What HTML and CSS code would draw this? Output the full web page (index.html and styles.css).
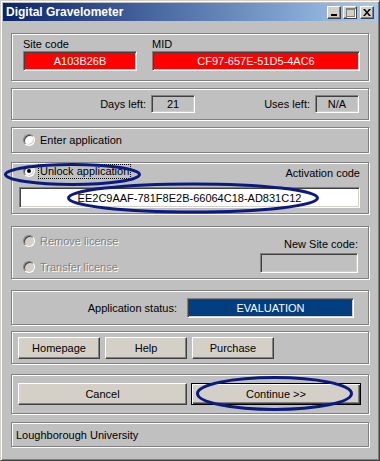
FILE: index.html
```html
<!DOCTYPE html>
<html>
<head>
<meta charset="utf-8">
<link rel="stylesheet" href="styles.css">
</head>
<body>
<div class="window">
  <div class="titlebar">
    <span class="title">Digital Gravelometer</span>
    <div class="tbtns">
      <div class="tbtn tb-min"><span class="min-glyph"></span></div>
      <div class="tbtn tb-max"><span class="max-glyph"></span></div>
      <div class="tbtn tb-close">
        <svg width="8" height="7" viewBox="0 0 8 7"><path d="M0 0h2l2 2.5 2-2.5h2l-3 3.5 3 3.5h-2l-2-2.5-2 2.5h-2l3-3.5z" fill="#000"/></svg>
      </div>
    </div>
  </div>
  <div class="client">
    <div class="group g1">
      <div class="lbl">Site code</div>
      <div class="lbl">MID</div>
      <div class="field red">A103B26B</div>
      <div class="field red">CF97-657E-51D5-4AC6</div>
    </div>
    <div class="group g2">
      <div class="pair"><span>Days left:</span><div class="field small">21</div></div>
      <div class="pair"><span>Uses left:</span><div class="field small">N/A</div></div>
    </div>
    <div class="group g3">
      <div class="radio-row"><span class="radio"></span><span class="rtext">Enter application</span></div>
    </div>
    <div class="group g4">
      <div class="g4-top">
        <div class="radio-row"><span class="radio checked"></span><span class="rtext focus">Unlock application</span></div>
        <span class="act-lbl">Activation code</span>
      </div>
      <div class="field white">EE2C9AAF-781F8E2B-66064C18-AD831C12</div>
    </div>
    <div class="group g5">
      <div class="g5-left">
        <div class="radio-row"><span class="radio disabled"></span><span class="rtext dis">Remove license</span></div>
        <div class="radio-row"><span class="radio disabled"></span><span class="rtext dis">Transfer license</span></div>
      </div>
      <div class="g5-right">
        <span class="nsc">New Site code:</span>
        <div class="field nsc-field"></div>
      </div>
    </div>
    <div class="group g6">
      <span>Application status:</span>
      <div class="field status">EVALUATION</div>
    </div>
    <div class="group g7">
      <div class="btn">Homepage</div>
      <div class="btn">Help</div>
      <div class="btn">Purchase</div>
    </div>
    <div class="group g8">
      <div class="btn wide">Cancel</div>
      <div class="btn wide default">Continue &gt;&gt;</div>
    </div>
    <div class="group g9">
      <span>Loughborough University</span>
    </div>
  </div>
  <svg class="annot" width="380" height="461" viewBox="0 0 380 461">
    <ellipse cx="72.5" cy="174.5" rx="67" ry="10" fill="none" stroke="#0b1a82" stroke-width="3"/>
    <ellipse cx="193" cy="198" rx="124.5" ry="14" fill="none" stroke="#0b1a82" stroke-width="3"/>
    <ellipse cx="274.5" cy="393.5" rx="77" ry="16" fill="none" stroke="#0b1a82" stroke-width="3"/>
  </svg>
</div>
</body>
</html>
```
FILE: styles.css
```css
html, body {
  margin: 0;
  padding: 0;
  background: #c0c0c0;
}
body {
  font-family: "Liberation Sans", Arial, sans-serif;
  font-size: 11px;
  color: #000;
}
.window {
  position: relative;
  width: 380px;
  height: 461px;
  box-sizing: border-box;
  background: #c0c0c0;
  border-top: 1px solid #d4d0c8;
  border-left: 1px solid #d4d0c8;
  border-right: 1px solid #404040;
  border-bottom: 1px solid #404040;
  box-shadow: inset 1px 1px 0 #fff, inset -1px -1px 0 #808080;
  padding: 2px 2px 0 2px;
  overflow: hidden;
}
.titlebar {
  height: 18px;
  background: linear-gradient(to right, #0a246a, #a6caf0);
  display: flex;
  align-items: center;
  justify-content: space-between;
  padding-left: 3px;
}
.title {
  color: #fff;
  font-weight: bold;
  font-size: 12px;
  line-height: 14px;
}
.tbtns {
  display: flex;
  align-items: center;
  margin-right: 3px;
}
.tbtn {
  width: 14px;
  height: 13px;
  box-sizing: border-box;
  background: #d4d0c8;
  border-top: 1px solid #fff;
  border-left: 1px solid #fff;
  border-right: 1px solid #404040;
  border-bottom: 1px solid #404040;
  box-shadow: inset -1px -1px 0 #808080;
  display: flex;
  align-items: center;
  justify-content: center;
  position: relative;
}
.tb-max { margin-left: 2px; }
.tb-close { margin-left: 3px; }
.min-glyph {
  position: absolute;
  left: 3px;
  bottom: 2px;
  width: 6px;
  height: 2px;
  background: #000;
}
.max-glyph {
  width: 7px;
  height: 6px;
  border: 1px solid #808080;
  border-top-width: 2px;
  box-shadow: 1px 1px 0 #fff;
}
.client {
  padding: 0 8px 0 8px;
  display: flex;
  flex-direction: column;
}
.group {
  box-sizing: border-box;
  border: 1px solid #808080;
  box-shadow: 1px 1px 0 #fff, inset 1px 1px 0 #fff;
}
.lbl { line-height: 13px; }
.field {
  box-sizing: border-box;
  border-top: 1px solid #808080;
  border-left: 1px solid #808080;
  border-right: 1px solid #fff;
  border-bottom: 1px solid #fff;
  box-shadow: inset 1px 1px 0 #404040, inset -1px -1px 0 #d4d0c8;
  display: flex;
  align-items: center;
  justify-content: center;
  white-space: nowrap;
}
.red {
  background: #ff0000;
  color: #fff;
  height: 20px;
}
.white {
  background: #fff;
  height: 21px;
}
.g1 {
  margin-top: 12px;
  height: 48px;
  display: grid;
  grid-template-columns: 114px 208px;
  column-gap: 15px;
  padding: 4px 0 0 11px;
  align-content: start;
}
.g2 {
  margin-top: 7px;
  height: 32px;
  display: grid;
  grid-template-columns: 183px 164px;
  align-items: center;
}
.pair {
  display: flex;
  justify-content: flex-end;
  align-items: center;
  gap: 5px;
}
.small {
  width: 44px;
  height: 18px;
}
.g3 {
  margin-top: 7px;
  height: 26px;
  display: flex;
  align-items: center;
  padding-left: 11px;
}
.radio-row {
  display: flex;
  align-items: center;
  height: 14px;
}
.radio {
  width: 12px;
  height: 12px;
  box-sizing: border-box;
  border-radius: 50%;
  border: 1px solid;
  border-color: #808080 #fff #fff #808080;
  box-shadow: inset 1px 1px 0 #404040, inset -1px -1px 0 #d4d0c8;
  background: #fff;
  position: relative;
  flex: none;
}
.radio.checked::after {
  content: "";
  position: absolute;
  left: 3px;
  top: 3px;
  width: 4px;
  height: 4px;
  border-radius: 50%;
  background: #000;
}
.radio.disabled { background: #d4d0c8; }
.rtext { margin-left: 5px; line-height: 13px; }
.rtext.focus {
  margin-left: 4px;
  outline: 1px dotted #000;
  padding: 0 1px;
}
.rtext.dis {
  color: #808080;
  text-shadow: 1px 1px 0 #fff;
}
.g4 {
  margin-top: 9px;
  height: 52px;
  padding: 1px 8px 0 7px;
  display: flex;
  flex-direction: column;
}
.g4-top {
  display: flex;
  justify-content: space-between;
  align-items: center;
  padding-left: 4px;
  height: 14px;
}
.act-lbl { position: relative; top: 2px; }
.g4 .white { margin-top: 9px; }
.g5 {
  margin-top: 12px;
  height: 53px;
  display: flex;
  justify-content: space-between;
  padding: 0 10px 0 11px;
}
.g5-left {
  padding-top: 7px;
  display: flex;
  flex-direction: column;
  gap: 12px;
}
.g5-right {
  padding-top: 11px;
  display: flex;
  flex-direction: column;
  align-items: flex-end;
}
.nsc { line-height: 13px; }
.nsc-field {
  margin-top: 2px;
  width: 98px;
  height: 20px;
}
.g6 {
  margin-top: 11px;
  height: 35px;
  display: flex;
  justify-content: flex-end;
  align-items: center;
  padding-right: 14px;
  gap: 10px;
}
.status {
  width: 167px;
  height: 20px;
  background: #003e80;
  color: #fff;
}
.btn {
  box-sizing: border-box;
  height: 22px;
  width: 82px;
  background: #d4d0c8;
  border-top: 1px solid #fff;
  border-left: 1px solid #fff;
  border-right: 1px solid #404040;
  border-bottom: 1px solid #404040;
  box-shadow: inset -1px -1px 0 #808080;
  display: flex;
  align-items: center;
  justify-content: center;
}
.g7 {
  margin-top: 6px;
  height: 33px;
  display: flex;
  gap: 5px;
  padding: 5px 0 0 6px;
}
.g8 {
  margin-top: 10px;
  height: 40px;
  display: flex;
  align-items: center;
  gap: 4px;
  padding: 0 7px 0 6px;
}
.wide { width: 169px; }
.btn.default {
  width: 170px;
  border: 1px solid #000;
  box-shadow: inset 1px 1px 0 #fff, inset -1px -1px 0 #404040, inset -2px -2px 0 #808080;
}
.g9 {
  margin-top: 8px;
  height: 25px;
  display: flex;
  align-items: center;
  padding-left: 4px;
}
.annot {
  position: absolute;
  left: -1px;
  top: -1px;
  pointer-events: none;
}
```
